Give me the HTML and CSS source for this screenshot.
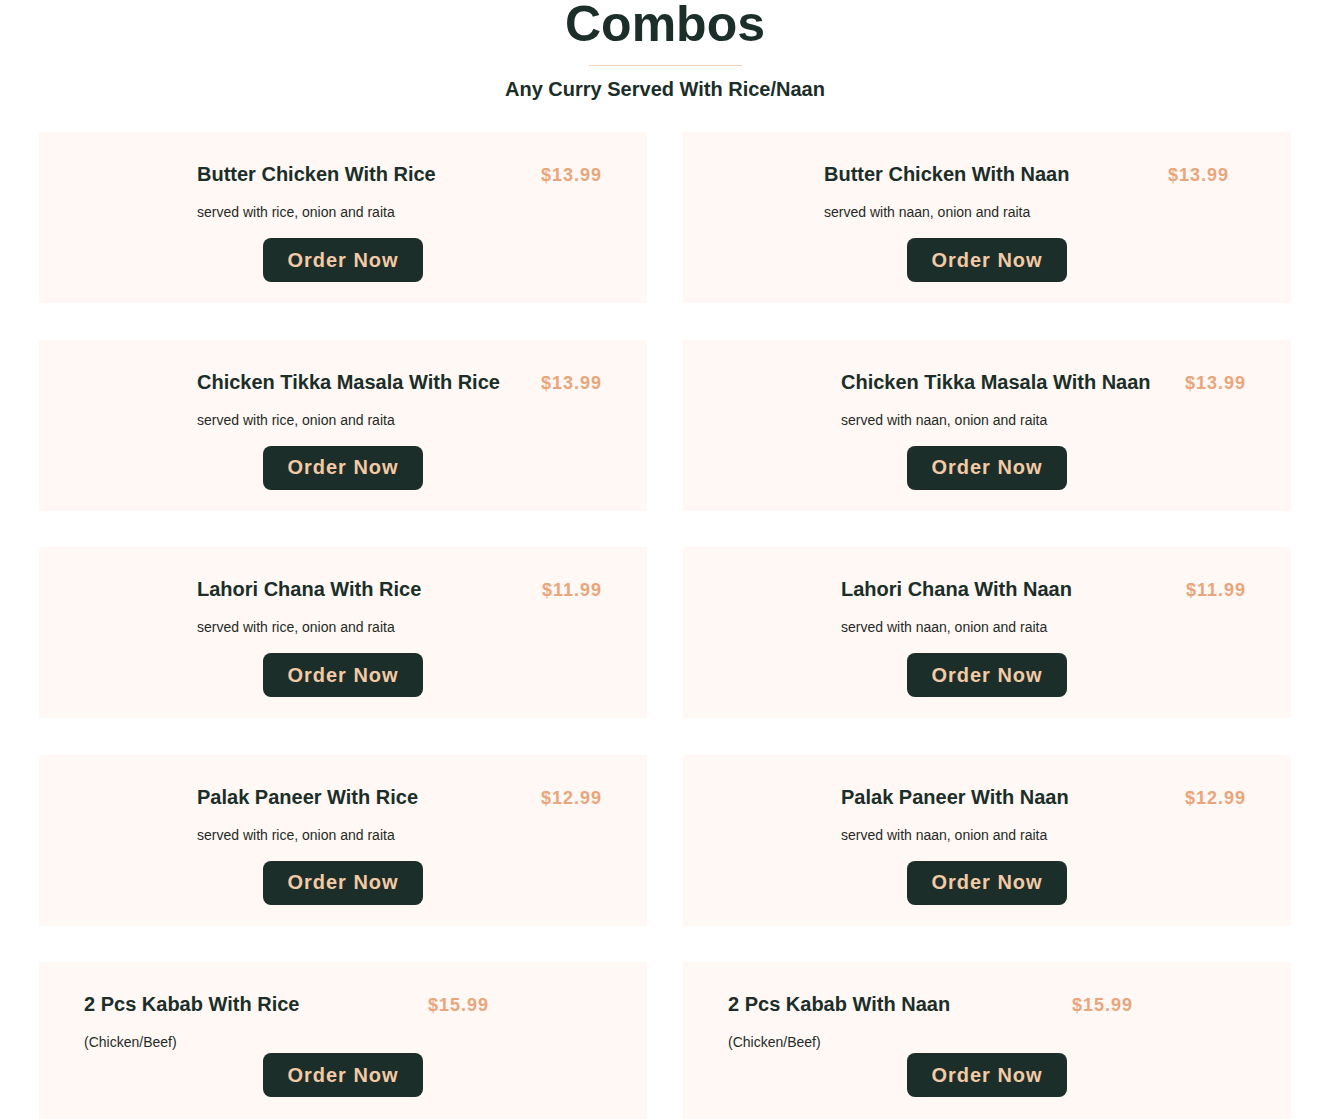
FILE: index.html
```html
<!DOCTYPE html>
<html lang="en">
<head>
<meta charset="utf-8">
<title>Combos</title>
<link rel="stylesheet" href="styles.css">
</head>
<body>
<section class="combos">
  <header class="combos-head">
    <h1 class="combos-title">Combos</h1>
    <div class="combos-divider"></div>
    <h2 class="combos-sub">Any Curry Served With Rice/Naan</h2>
  </header>
  <div class="grid">
    <article class="card">
      <div class="card-row">
        <div class="thumb"></div>
        <div class="info">
          <div class="info-top"><h3 class="name">Butter Chicken With Rice</h3><span class="price">$13.99</span></div>
          <p class="desc">served with rice, onion and raita</p>
        </div>
      </div>
      <button class="order">Order Now</button>
    </article>
    <article class="card">
      <div class="card-row">
        <div class="thumb thumb-narrow"></div>
        <div class="info">
          <div class="info-top"><h3 class="name">Butter Chicken With Naan</h3><span class="price">$13.99</span></div>
          <p class="desc">served with naan, onion and raita</p>
        </div>
      </div>
      <button class="order">Order Now</button>
    </article>
    <article class="card">
      <div class="card-row">
        <div class="thumb"></div>
        <div class="info">
          <div class="info-top"><h3 class="name">Chicken Tikka Masala With Rice</h3><span class="price">$13.99</span></div>
          <p class="desc">served with rice, onion and raita</p>
        </div>
      </div>
      <button class="order">Order Now</button>
    </article>
    <article class="card">
      <div class="card-row">
        <div class="thumb"></div>
        <div class="info">
          <div class="info-top"><h3 class="name">Chicken Tikka Masala With Naan</h3><span class="price">$13.99</span></div>
          <p class="desc">served with naan, onion and raita</p>
        </div>
      </div>
      <button class="order">Order Now</button>
    </article>
    <article class="card">
      <div class="card-row">
        <div class="thumb"></div>
        <div class="info">
          <div class="info-top"><h3 class="name">Lahori Chana With Rice</h3><span class="price">$11.99</span></div>
          <p class="desc">served with rice, onion and raita</p>
        </div>
      </div>
      <button class="order">Order Now</button>
    </article>
    <article class="card">
      <div class="card-row">
        <div class="thumb"></div>
        <div class="info">
          <div class="info-top"><h3 class="name">Lahori Chana With Naan</h3><span class="price">$11.99</span></div>
          <p class="desc">served with naan, onion and raita</p>
        </div>
      </div>
      <button class="order">Order Now</button>
    </article>
    <article class="card">
      <div class="card-row">
        <div class="thumb"></div>
        <div class="info">
          <div class="info-top"><h3 class="name">Palak Paneer With Rice</h3><span class="price">$12.99</span></div>
          <p class="desc">served with rice, onion and raita</p>
        </div>
      </div>
      <button class="order">Order Now</button>
    </article>
    <article class="card">
      <div class="card-row">
        <div class="thumb"></div>
        <div class="info">
          <div class="info-top"><h3 class="name">Palak Paneer With Naan</h3><span class="price">$12.99</span></div>
          <p class="desc">served with naan, onion and raita</p>
        </div>
      </div>
      <button class="order">Order Now</button>
    </article>
    <article class="card">
      <div class="card-row">
        <div class="info">
          <div class="info-top"><h3 class="name">2 Pcs Kabab With Rice</h3><span class="price">$15.99</span></div>
          <p class="desc">(Chicken/Beef)</p>
        </div>
      </div>
      <button class="order order-tight">Order Now</button>
    </article>
    <article class="card">
      <div class="card-row">
        <div class="info">
          <div class="info-top"><h3 class="name">2 Pcs Kabab With Naan</h3><span class="price">$15.99</span></div>
          <p class="desc">(Chicken/Beef)</p>
        </div>
      </div>
      <button class="order order-tight">Order Now</button>
    </article>
  </div>
</section>
</body>
</html>
```
FILE: styles.css
```css
html, body {
  margin: 0;
  padding: 0;
  background: #ffffff;
}
body {
  font-family: "Liberation Sans", Arial, sans-serif;
  color: #1b2e29;
}
.combos {
  padding: 0 39px;
}
.combos-head {
  text-align: center;
}
.combos-title {
  margin: -4px 0 0;
  font-size: 50px;
  line-height: 57.5px;
  font-weight: 700;
  color: #1b2e29;
}
.combos-divider {
  width: 153px;
  height: 1px;
  background: #f0d2bd;
  margin: 11.5px auto 0;
}
.combos-sub {
  margin: 11px 0 0;
  font-size: 20px;
  line-height: 24px;
  font-weight: 700;
  color: #1b2e29;
}
.grid {
  margin-top: 31px;
  display: grid;
  grid-template-columns: 1fr 1fr;
  column-gap: 36px;
  row-gap: 36.5px;
}
.card {
  background: #fff8f4;
  padding: 20px 45px 21px;
  display: flex;
  flex-direction: column;
  align-items: stretch;
  height: 171px;
  box-sizing: border-box;
}
.card-row {
  display: flex;
  align-items: flex-start;
}
.thumb {
  width: 113px;
  height: 83px;
  flex: none;
}
.thumb-narrow {
  width: 96px;
}
.info {
  width: 404px;
  flex: none;
  padding-top: 10px;
}
.info-top {
  display: flex;
  justify-content: space-between;
  align-items: baseline;
}
.name {
  margin: 0;
  font-size: 20px;
  line-height: 24px;
  font-weight: 700;
  color: #1b2e29;
}
.price {
  font-size: 18px;
  font-weight: 700;
  letter-spacing: 1px;
  color: #e9a57b;
  margin-right: -1px;
}
.desc {
  margin: 18px 0 0;
  font-size: 14px;
  line-height: 16px;
  color: #1f2a27;
}
.order {
  align-self: center;
  margin-top: 3px;
  width: 160px;
  height: 44px;
  border: none;
  border-radius: 8px;
  background: #1b2e29;
  color: #f4c9a5;
  font-family: "Liberation Sans", Arial, sans-serif;
  font-size: 20px;
  font-weight: 700;
  letter-spacing: 1px;
  padding: 0;
  cursor: pointer;
}
.order-tight {
  margin-top: 3px;
}
```
